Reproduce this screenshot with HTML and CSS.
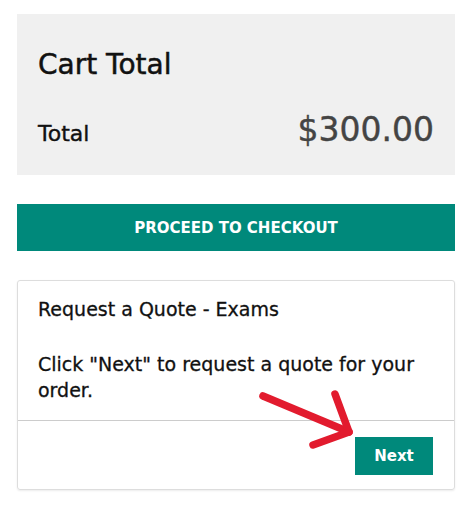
FILE: index.html
```html
<!DOCTYPE html>
<html lang="en">

<head>
    <meta charset="UTF-8">
    <meta name="viewport" content="width=device-width, initial-scale=1.0">
    <title>Cart</title>
    <link rel="stylesheet" href="styles.css">
</head>

<body>
    <div class="cart-total">
        <h2>Cart Total</h2>
        <div class="total-row">
            <span class="label">Total</span>
            <span class="amount">$300.00</span>
        </div>
    </div>

    <a href="" class="checkout-btn">PROCEED TO CHECKOUT</a>

    <div class="quote">
        <div class="quote-body">
            <p class="quote-title">Request a Quote - Exams</p>
            <p class="quote-text">Click "Next" to request a quote for your order.</p>
        </div>
        <div class="quote-footer">
            <button class="next-btn">Next</button>
        </div>
        <!-- red arrow pointing at the button -->
        <svg class="arrow" width="110" height="70" viewBox="0 0 110 70">
            <g fill="none" stroke="#e21b2e" stroke-width="7.5" stroke-linecap="round" stroke-linejoin="round">
                <path d="M4 8 L90 44" />
                <path d="M76 6 L90 44 L54 57" />
            </g>
        </svg>
    </div>
</body>

</html>
```

FILE: styles.css
```css
body {
    margin: 0;
    padding: 14px 17px;
    font-family: "DejaVu Sans", "Noto Sans", sans-serif;
    color: #111;
    background: #fff;
}

.cart-total {
    background: #f0f0f0;
    height: 161px;
    box-sizing: border-box;
    padding: 34px 21px 0 21px;
}

.cart-total h2 {
    margin: 0;
    font-size: 28px;
    font-weight: normal;
    line-height: 34px;
    -webkit-text-stroke: 0.5px #111;
}

.total-row {
    display: flex;
    justify-content: space-between;
    align-items: baseline;
    margin-top: 28px;
}

.total-row .label {
    font-size: 22px;
    -webkit-text-stroke: 0.4px #111;
}

.total-row .amount {
    font-size: 33px;
    color: #444;
    -webkit-text-stroke: 0.4px #444;
}

.checkout-btn {
    display: flex;
    align-items: center;
    justify-content: center;
    height: 47px;
    margin-top: 29px;
    background: #00897b;
    color: #fff;
    font-size: 15px;
    font-weight: bold;
    text-decoration: none;
}

.quote {
    position: relative;
    margin-top: 29px;
    border: 1px solid #ddd;
    border-radius: 3px;
    box-shadow: 0 1px 2px rgba(0, 0, 0, 0.08);
}

.quote-body {
    padding: 16px 20px 17px 20px;
}

.quote-body p {
    margin: 0;
    -webkit-text-stroke: 0.3px #111;
}

.quote-title {
    font-size: 19px;
    line-height: 24px;
}

.quote-text {
    margin-top: 30px !important;
    font-size: 19px;
    line-height: 26px;
}

.quote-footer {
    display: flex;
    justify-content: flex-end;
    border-top: 1px solid #ccc;
    padding: 16px 21px 14px 21px;
}

.next-btn {
    width: 78px;
    height: 38px;
    border: none;
    background: #00897b;
    color: #fff;
    font-family: inherit;
    font-size: 15px;
    font-weight: bold;
}

.arrow {
    position: absolute;
    left: 241px;
    top: 107px;
}
```
